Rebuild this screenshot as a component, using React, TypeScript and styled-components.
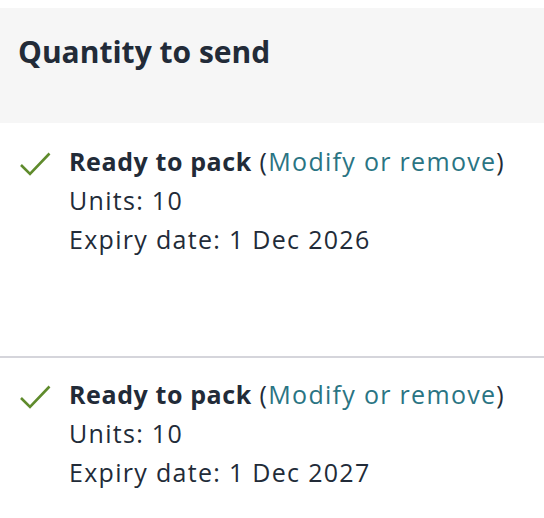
import React from "react";
import styled, { createGlobalStyle } from "styled-components";

const GlobalStyle = createGlobalStyle`
  html, body {
    margin: 0;
    padding: 0;
    background: #ffffff;
  }
  body {
    font-family: "Open Sans", "Noto Sans", Arial, sans-serif;
    color: #222b38;
  }
`;

const Page = styled.div`
  padding-top: 8px;
`;

const Header = styled.div`
  height: 115px;
  box-sizing: border-box;
  padding: 26px 18px 0;
  background: #f6f6f6;
`;

const Title = styled.h2`
  margin: 0;
  font-size: 30px;
  line-height: 36px;
  font-weight: 700;
  color: #222b38;
`;

const Row = styled.div<{ $minHeight?: number; $divider?: boolean }>`
  display: grid;
  grid-template-columns: 69px 1fr;
  box-sizing: border-box;
  min-height: ${(p) => (p.$minHeight ? `${p.$minHeight}px` : "auto")};
  padding: ${(p) => (p.$divider ? "17px" : "19px")} 0 20px;
  border-top: ${(p) => (p.$divider ? "2px solid #d5d5db" : "none")};
`;

const IconCell = styled.div`
  padding: 7px 0 0 19px;
`;

const Lines = styled.div`
  font-size: 25px;
  line-height: 39px;
  letter-spacing: 1.3px;
  color: #222b38;
`;

const Strong = styled.span`
  font-weight: 700;
  letter-spacing: 0.6px;
`;

const Link = styled.a`
  color: #2a7483;
  text-decoration: none;
  cursor: pointer;
`;

const Check = () => (
  <svg width="32" height="28" viewBox="0 0 32 28" fill="none">
    <path
      d="M2 16 L11 25 L30.5 4.5"
      stroke="#5f8b2c"
      strokeWidth="2.6"
      strokeLinejoin="miter"
    />
  </svg>
);

type Item = { units: number; expiry: string };

const items: Item[] = [
  { units: 10, expiry: "1 Dec 2026" },
  { units: 10, expiry: "1 Dec 2027" },
];

export default function App() {
  return (
    <>
      <GlobalStyle />
      <Page>
        <Header>
          <Title>Quantity to send</Title>
        </Header>
        {items.map((it, i) => (
          <Row key={i} $divider={i > 0} $minHeight={i === 0 ? 233 : undefined}>
            <IconCell>
              <Check />
            </IconCell>
            <Lines>
              <div>
                <Strong>Ready to pack</Strong> (<Link>Modify or remove</Link>)
              </div>
              <div>Units: {it.units}</div>
              <div>Expiry date: {it.expiry}</div>
            </Lines>
          </Row>
        ))}
      </Page>
    </>
  );
}
